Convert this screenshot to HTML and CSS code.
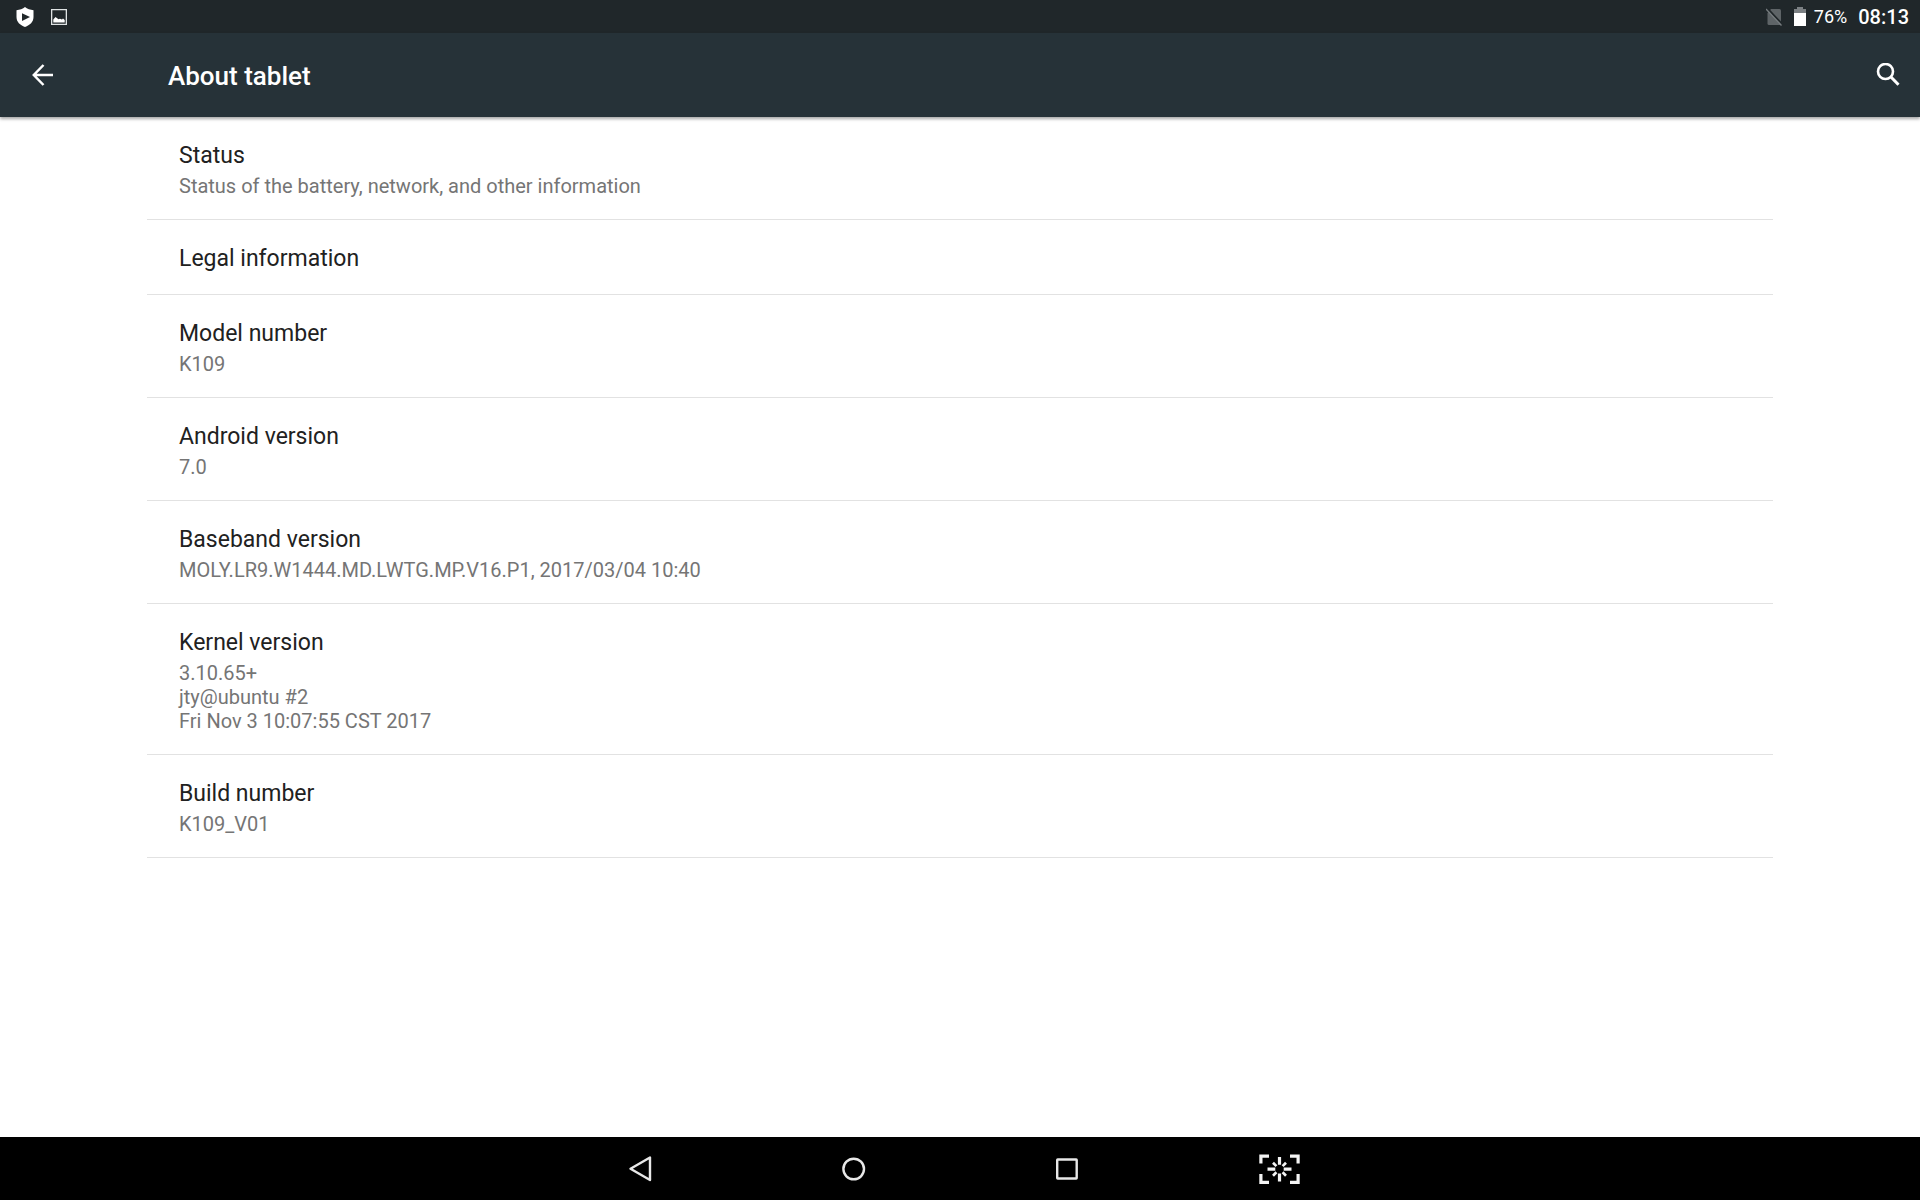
FILE: index.html
```html
<!DOCTYPE html>
<html lang="en">
<head>
<meta charset="utf-8">
<title>About tablet</title>
<link rel="stylesheet" href="styles.css">
</head>
<body>
<div class="status-bar">
  <div class="notifications">
    <svg class="shield" width="18" height="20" viewBox="0 0 18 20"><path fill="#fff" fill-rule="evenodd" d="M9 0C7 1.800 3.500 3 0.500 3.200V10C0.500 15 4 18 9 20C14 18 17.500 15 17.500 10V3.200C14.500 3 11 1.800 9 0ZM6 6.200L14 10L6 14Z"/></svg>
    <svg width="16" height="16" viewBox="0 0 16 16"><path fill="none" stroke="#dfe3e4" stroke-width="1.300" d="M.65.65H15.350V15.350H.65Z"/><path fill="#fff" d="M2.300 13.500V10.500L4.500 8L7.500 10.300L9 9.800L11 10.500L12 9.500L13.700 11V13.500Z"/></svg>
  </div>
  <div class="system">
    <svg width="16" height="18" viewBox="0 0 16 18"><path fill="#5e6467" d="M5 1H13.500Q15 1 15 2.500V15.500L14 17H3Q1.500 17 1.500 15.500V5Z"/><path stroke="#20272a" stroke-width="2" d="M1.500.5L16 16"/><path stroke="#767c7f" stroke-width="1.300" d="M0 1L15.500 17.500"/></svg>
    <svg class="battery" width="12" height="19" viewBox="0 0 12 19"><path fill="#7b8083" d="M3 0H9V2H12V6H0V2H3Z"/><path fill="#fff" d="M0 6H12V19H0Z"/></svg>
    <span class="percent">76%</span>
    <span class="clock">08:13</span>
  </div>
</div>
<header class="app-bar">
  <button class="icon-button" aria-label="Back"><svg width="22" height="22" viewBox="0 0 22 22"><path fill="none" stroke="#fff" stroke-width="2.500" d="M11.500 1L1.800 11L11.500 21M2 11H21"/></svg></button>
  <h1>About tablet</h1>
  <button class="icon-button" aria-label="Search"><svg width="24" height="24" viewBox="0 0 24 24"><circle cx="9.500" cy="8.500" r="7.500" fill="none" stroke="#fff" stroke-width="2.600"/><path stroke="#fff" stroke-width="3" d="M14.500 13.500L22.500 21.800"/></svg></button>
</header>
<main>
  <ul class="preferences">
    <li><h2>Status</h2><p>Status of the battery, network, and other information</p></li>
    <li><h2>Legal information</h2></li>
    <li><h2>Model number</h2><p>K109</p></li>
    <li><h2>Android version</h2><p>7.0</p></li>
    <li><h2>Baseband version</h2><p>MOLY.LR9.W1444.MD.LWTG.MP.V16.P1, 2017/03/04 10:40</p></li>
    <li><h2>Kernel version</h2><p>3.10.65+<br>jty@ubuntu #2<br>Fri Nov 3 10:07:55 CST 2017</p></li>
    <li><h2>Build number</h2><p>K109_V01</p></li>
  </ul>
</main>
<nav class="nav-bar" aria-label="System navigation">
  <button aria-label="Back"><svg width="42" height="30" viewBox="0 0 42 30"><path fill="none" stroke="#e8e8e8" stroke-width="2.400" stroke-linejoin="round" d="M30 3.500V26L10.500 14.700Z"/></svg></button>
  <button aria-label="Home"><svg width="42" height="30" viewBox="0 0 42 30"><circle cx="20.700" cy="15" r="10.300" fill="none" stroke="#e8e8e8" stroke-width="2.400"/></svg></button>
  <button aria-label="Overview"><svg width="42" height="30" viewBox="0 0 42 30"><rect x="11.200" y="5.500" width="19.500" height="19" rx=".5" fill="none" stroke="#e8e8e8" stroke-width="2.400"/></svg></button>
  <button aria-label="Screenshot"><svg width="42" height="30" viewBox="0 0 42 30"><g fill="none" stroke="#f4f4f4" stroke-width="3.200"><path d="M1.900 9.500V2.100H10M31 2.100H39.100V9.500M1.900 20V28.400H10M31 28.400H39.100V20"/><path d="M20.500 3V10.800M20.500 19.600V27.500M8.500 15.200H16.300M24.700 15.200H32.500"/><path stroke-width="2.700" d="M14 8.700L17.400 12.100M27 8.700L23.600 12.100M14 21.700L17.400 18.300M27 21.700L23.600 18.300"/></g></svg></button>
</nav>
</body>
</html>
```
FILE: styles.css
```css
* { box-sizing: border-box; }
body {
  display: flex;
  flex-direction: column;
  min-height: 100vh;
  margin: 0;
  background: #fff;
  color: #212121;
  font-family: Roboto, "Noto Sans", sans-serif;
}
h1, h2, p, ul { margin: 0; padding: 0; }
svg { display: block; }
button { padding: 0; border: 0; background: none; }
.status-bar {
  display: flex;
  align-items: center;
  justify-content: space-between;
  height: 33px;
  padding: 1px 11px 0 16px;
  background: #20272a;
  color: #fff;
}
.notifications, .system { display: flex; align-items: center; }
.notifications { gap: 17px; }
.battery { margin: 0 8px 2px 12px; }
.percent { margin-right: 11px; font-size: 18px; line-height: 32px; }
.clock { font-size: 20px; font-weight: 500; line-height: 32px; }
.app-bar {
  display: flex;
  align-items: center;
  height: 84px;
  padding: 0 20px 0 32px;
  background: #263238;
  color: #fff;
  box-shadow: 0 2px 3px rgba(0, 0, 0, .35);
}
.app-bar h1 {
  flex: 1;
  padding: 2px 0 0 114px;
  font-size: 26px;
  font-weight: 500;
  line-height: 32px;
}
main { flex: 1; padding: 0 147px; }
.preferences { list-style: none; }
.preferences li {
  padding: 25px 32px 21px;
  border-bottom: 1px solid #e2e2e2;
}
.preferences h2 { font-size: 23px; font-weight: 400; line-height: 28px; }
.preferences p { margin-top: 4px; color: #757575; font-size: 20px; line-height: 24px; }
.nav-bar {
  display: flex;
  align-items: center;
  justify-content: center;
  gap: 171px;
  height: 63px;
  background: #000;
}
```
